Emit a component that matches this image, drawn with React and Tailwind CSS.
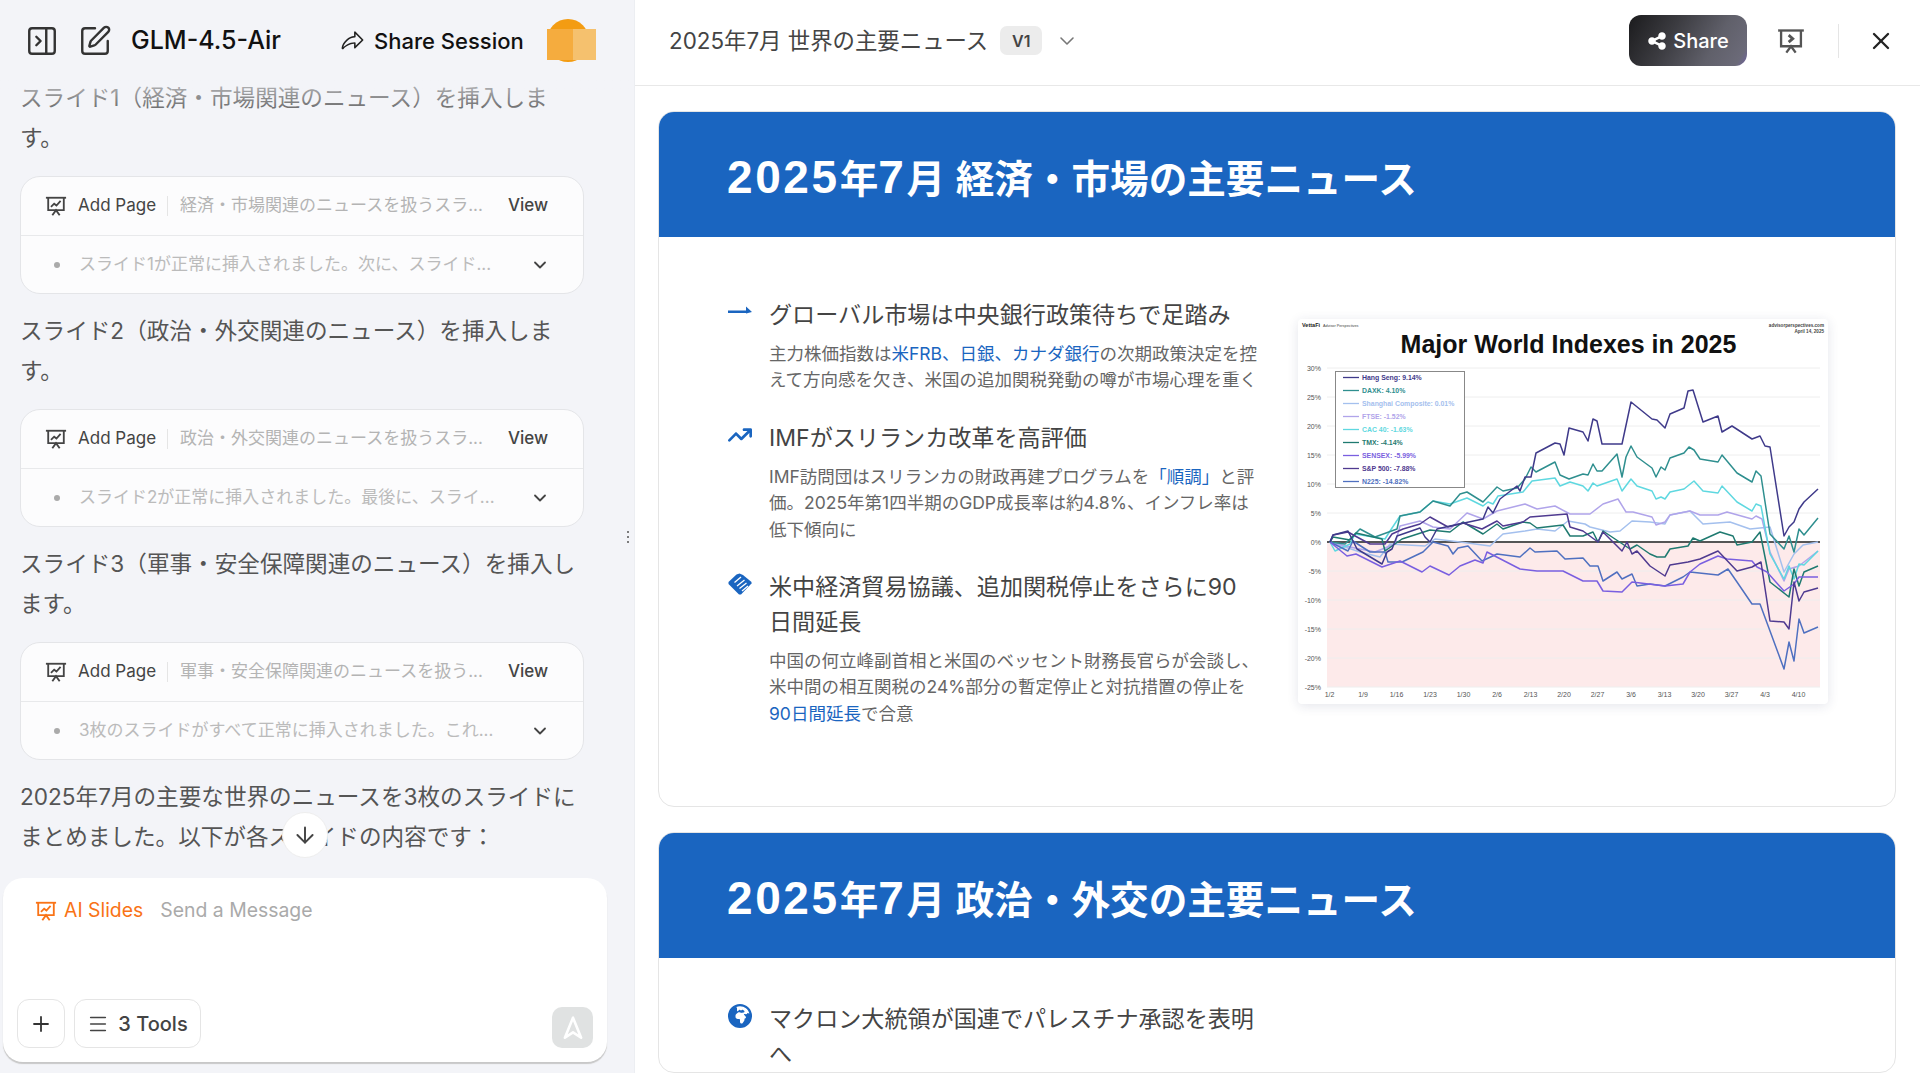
import { ArrowDown, ChevronDown, Menu, PanelRightClose, Plus, SquarePen, X } from "lucide-react";
import { FaArrowTrendUp, FaEarthAfrica, FaShareNodes } from "react-icons/fa6";
import { PiShareFat } from "react-icons/pi";

// point lists are in page pixels, the svg viewBox is set to the same origin
const series = [
  { c: "#a4c0ee", p: "1330,543 1345,548 1360,553 1380,558 1390,545 1425,547 1435,540 1460,543 1490,547 1503,535 1525,532 1537,530 1555,532 1568,522 1585,525 1590,528 1610,533 1620,532 1632,522 1650,523 1665,525 1670,516 1690,512 1703,525 1730,523 1750,530 1770,528 1784,573 1794,555 1803,546 1818,543" },
  { c: "#b0a4ea", p: "1330,543 1350,548 1375,553 1395,545 1400,527 1420,522 1433,528 1450,530 1467,514 1483,520 1497,512 1525,505 1537,510 1555,507 1570,515 1590,515 1603,505 1618,500 1626,513 1633,513 1652,518 1656,526 1665,523 1670,516 1690,512 1700,516 1718,516 1727,513 1752,520 1756,517 1762,520 1770,553 1784,582 1789,570 1799,567 1818,552" },
  { c: "#5fd8e0", p: "1330,543 1335,552 1350,545 1355,535 1385,540 1390,532 1400,517 1420,513 1433,502 1450,505 1467,499 1483,507 1488,503 1493,505 1498,497 1523,493 1532,482 1555,479 1560,487 1570,483 1583,487 1588,492 1593,484 1597,487 1617,480 1622,492 1631,480 1637,487 1652,492 1656,500 1661,498 1665,500 1670,493 1684,490 1694,482 1703,492 1718,494 1722,487 1737,503 1752,512 1756,505 1761,507 1770,555 1784,580 1789,567 1794,580 1799,565 1804,566 1818,552" },
  { c: "#2f8f8f", p: "1330,543 1345,545 1360,530 1375,538 1397,530 1400,517 1420,513 1433,502 1450,507 1460,495 1467,493 1483,503 1497,488 1503,492 1517,489 1525,480 1531,468 1536,473 1555,463 1560,476 1569,480 1583,475 1588,476 1593,465 1597,472 1602,472 1617,455 1622,478 1626,458 1631,447 1637,458 1652,469 1656,478 1661,468 1665,471 1670,459 1684,454 1689,448 1694,451 1700,460 1718,463 1722,456 1737,474 1752,483 1756,472 1761,477 1770,535 1784,550 1789,537 1794,553 1799,530 1804,536 1818,519" },
  { c: "#1f7a70", p: "1330,543 1333,538 1350,541 1356,534 1382,540 1385,552 1402,540 1430,531 1450,533 1463,523 1483,535 1497,525 1503,530 1523,523 1530,524 1537,529 1563,526 1570,537 1583,537 1593,533 1598,543 1603,532 1618,542 1630,550 1637,546 1650,555 1657,558 1665,558 1670,550 1688,547 1693,539 1700,542 1720,533 1733,537 1737,546 1752,543 1760,533 1770,583 1789,598 1794,570 1799,587 1804,573 1818,567" },
  { c: "#4f70c0", p: "1330,543 1348,552 1353,542 1370,553 1385,553 1388,563 1402,563 1423,553 1433,543 1448,547 1453,555 1458,549 1468,547 1482,562 1497,555 1520,558 1530,549 1535,553 1557,552 1565,560 1583,559 1590,567 1598,567 1603,582 1617,573 1622,580 1632,575 1637,587 1650,585 1665,587 1683,578 1690,573 1718,576 1728,570 1737,583 1752,605 1760,605 1770,632 1784,670 1789,643 1794,662 1799,620 1804,634 1818,628" },
  { c: "#7a5fe0", p: "1330,543 1347,557 1356,555 1382,568 1400,562 1422,573 1430,567 1449,576 1460,567 1475,561 1483,564 1487,553 1520,570 1537,572 1563,572 1583,582 1597,582 1603,592 1622,593 1632,583 1665,587 1683,585 1690,573 1700,565 1718,557 1727,560 1752,562 1757,568 1767,573 1784,592 1794,585 1799,578 1818,578" },
  { c: "#4f3a90", p: "1330,543 1333,536 1348,533 1357,538 1370,545 1385,545 1392,535 1403,530 1420,525 1430,518 1448,528 1463,524 1482,530 1497,522 1503,527 1523,523 1530,518 1567,515 1570,528 1583,532 1598,543 1603,533 1622,552 1627,543 1632,555 1637,552 1650,567 1665,577 1670,566 1688,563 1700,560 1718,552 1737,572 1752,568 1761,563 1770,622 1784,623 1789,630 1794,583 1799,602 1804,593 1818,589" },
  { c: "#3f3a8a", p: "1330,543 1333,536 1348,532 1353,542 1357,550 1382,565 1387,553 1392,550 1397,537 1420,529 1425,538 1430,543 1437,530 1450,527 1483,520 1488,508 1493,514 1500,500 1517,487 1520,492 1525,478 1531,478 1536,454 1555,444 1560,445 1564,456 1569,429 1583,433 1588,442 1593,420 1597,422 1602,445 1622,445 1631,403 1652,420 1657,421 1665,429 1670,415 1684,409 1688,392 1693,391 1703,423 1718,417 1722,433 1732,427 1752,440 1760,437 1765,447 1770,448 1784,537 1789,528 1794,523 1799,510 1804,503 1818,490" },
];

const legend = [
  ["Hang Seng: 9.14%", "#3f3a8a"],
  ["DAXK: 4.10%", "#2f8f8f"],
  ["Shanghai Composite: 0.01%", "#a4c0ee"],
  ["FTSE: -1.52%", "#b0a4ea"],
  ["CAC 40: -1.63%", "#5fd8e0"],
  ["TMX: -4.14%", "#1f7a70"],
  ["SENSEX: -5.99%", "#7a5fe0"],
  ["S&P 500: -7.88%", "#4f3a90"],
  ["N225: -14.82%", "#4f70c0"],
];

const dates = ["1/2", "1/9", "1/16", "1/23", "1/30", "2/6", "2/13", "2/20", "2/27", "3/6", "3/13", "3/20", "3/27", "4/3", "4/10"];
const pcts = [30, 25, 20, 15, 10, 5, 0, -5, -10, -15, -20, -25];

function Chart() {
  return (
    <svg viewBox="1298 320 530 385" width="530" height="385" className="block [font-family:Liberation_Sans,sans-serif]">
      <rect x="1327" y="543" width="493" height="145" fill="#fdeaea" />
      {pcts.map((v, i) => (
        <g key={v}>
          <line x1="1327" x2="1820" y1={369 + i * 29} y2={369 + i * 29} stroke={v === 0 ? "#555" : "#eeeeee"} strokeWidth={v === 0 ? 2 : 1} />
          <text x="1321" y={371.5 + i * 29} textAnchor="end" fontSize="7" fill="#555">{v}%</text>
        </g>
      ))}
      {dates.map((d, i) => (
        <text key={d} x={1329.5 + i * 33.5} y="698" textAnchor="middle" fontSize="7" fill="#555">{d}</text>
      ))}
      {series.map((s) => (
        <polyline key={s.c} points={s.p} fill="none" stroke={s.c} strokeWidth="1.5" strokeLinejoin="round" />
      ))}
      <rect x="1335.5" y="372.5" width="129" height="116" fill="#fff" stroke="#888" strokeWidth="1" />
      {legend.map(([label, c], i) => (
        <g key={label}>
          <line x1="1343" x2="1359" y1={378.5 + i * 13} y2={378.5 + i * 13} stroke={c} strokeWidth="1.3" />
          <text x="1362" y={381 + i * 13} fontSize="6.9" fontWeight="700" fill={c}>{label}</text>
        </g>
      ))}
      <text x="1302" y="328" fontSize="5.5" fontWeight="700" fill="#222">VettaFi</text>
      <text x="1323" y="328" fontSize="3.8" fill="#444">Advisor Perspectives</text>
      <text x="1824" y="328" textAnchor="end" fontSize="4.6" fontWeight="700" fill="#444">advisorperspectives.com</text>
      <text x="1824" y="334" textAnchor="end" fontSize="4.6" fontWeight="700" fill="#444">April 14, 2025</text>
      <text x="1568.5" y="354" textAnchor="middle" fontSize="25" fontWeight="700" fill="#111">Major World Indexes in 2025</text>
    </svg>
  );
}

function SlideIcon({ className, chevron }) {
  return (
    <svg viewBox="0 0 24 24" className={className} fill="none" stroke="currentColor" strokeWidth="2">
      <path d="M1 3h22" />
      <path d="M3.5 3v13.5h17V3" />
      <path d="M8 22l4-5.5 4 5.5" />
      {chevron ? <path d="M10 7l3.5 3-3.5 3" strokeWidth="2.4" /> : <path d="M6.5 13l3.5-3.5 2.5 2L17 6.5" />}
    </svg>
  );
}

function ThinArrow() {
  return (
    <svg viewBox="0 0 24 14" className="mt-[5px] h-[14px] w-[24px]" fill="currentColor">
      <path d="M0 5.6h18V1.5L24 7l-6 1.5V8H0z" />
    </svg>
  );
}

function HandsIcon() {
  return (
    <svg viewBox="0 0 24 22" className="mt-[1px] h-[22px] w-[24px]">
      <path d="M8.5 1.5L11.5.5 15 2l8.5 7v1.5L13 21.5h-2L.5 11V9z" fill="currentColor" />
      <path d="M6.5 9.5L13 4M9 13l7.5-6M11.5 15.5L18.5 10M14 18l6-5" stroke="#fff" strokeWidth="1.3" fill="none" />
    </svg>
  );
}

function ToolCard({ desc, result }) {
  return (
    <div className="mt-[18px] w-[564px] rounded-[20px] border border-[#e4e5e8] bg-[#fcfcfd] text-[17px]">
      <div className="flex h-[59px] items-center border-b border-[#e8e9eb] pl-[24px]">
        <SlideIcon className="h-[22px] w-[22px] text-[#444]" />
        <span className="ml-[11px] w-[78px] whitespace-nowrap text-[#444]">Add Page</span>
        <span className="ml-[11px] h-[20px] w-px bg-[#e5e5e5]" />
        <span className="ml-[12px] w-[328px] whitespace-nowrap text-[#b4b4b4]">{desc}</span>
        <span className="whitespace-nowrap font-medium text-[#444]">View</span>
      </div>
      <div className="flex h-[57px] items-center pl-[33px]">
        <span className="h-[6px] w-[6px] rounded-full bg-[#aaa]" />
        <span className="ml-[19px] w-[451px] whitespace-nowrap text-[#bbb]">{result}</span>
        <ChevronDown className="h-[20px] w-[20px] text-[#444]" strokeWidth={2.2} />
      </div>
    </div>
  );
}

function Para({ children, first }) {
  return <p className={`${first ? "" : "mt-[17px]"} w-[565px] text-[22.6px] leading-[40px] text-[#555]`}>{children}</p>;
}

function Num({ children }) {
  return <span className="text-[46px] tracking-[2.6px]">{children}</span>;
}

function SlideHeader({ topic }) {
  return (
    <div className="flex h-[125px] items-center bg-[#1a65c0] pl-[68px] pt-[7px]">
      <h1 className="whitespace-nowrap text-[38.6px] font-bold leading-[50px] text-white [font-family:Liberation_Sans,Noto_Sans_CJK_JP,sans-serif]">
        <Num>2025</Num>年<Num>7</Num>月 {topic}の主要ニュース
      </h1>
    </div>
  );
}

function Item({ icon, title, children }) {
  return (
    <div className="flex">
      <div className="w-[42px] shrink-0 pl-[1px] pt-[2px] text-[24px] text-[#1a65c0]">{icon}</div>
      <div className="w-[492px]">
        <h3 className="whitespace-nowrap text-[23.1px] leading-[35px] text-[#444]">{title}</h3>
        {children ? <p className="mt-[8px] whitespace-nowrap text-[17.5px] leading-[26.4px] text-[#666]">{children}</p> : null}
      </div>
    </div>
  );
}

function Link({ children }) {
  return <span className="text-[#1a65c0]">{children}</span>;
}

function Sidebar() {
  return (
    <aside className="relative flex h-full w-[635px] shrink-0 flex-col overflow-hidden border-r border-[#eceef2] bg-[#f3f4f8]">
      <header className="flex h-[78px] shrink-0 items-center pl-[25px] pt-[4px]">
        <PanelRightClose className="h-[34px] w-[34px] text-[#333]" strokeWidth={1.7} />
        <SquarePen className="ml-[19px] h-[34px] w-[34px] text-[#333]" strokeWidth={1.7} />
        <span className="ml-[19px] w-[189px] whitespace-nowrap text-[25px] font-medium text-[#111]">GLM-4.5-Air</span>
        <PiShareFat className="ml-[20px] h-[25px] w-[25px] text-[#222]" />
        <span className="ml-[9px] w-[151px] whitespace-nowrap text-[22px] font-medium text-[#111]">Share Session</span>
        <div className="relative ml-[22px] h-[44px] w-[50px]">
          <div className="absolute left-0 top-0 h-[43px] w-[42px] rounded-full bg-[#f39c12]" />
          <div className="absolute left-0 top-[10px] h-[31px] w-[26px] bg-[#f5ac3e]" />
          <div className="absolute left-[26px] top-[10px] h-[31px] w-[23px] bg-[#f5c16e]" />
        </div>
      </header>
      <div className="px-[20px]">
        <Para first>スライド1（経済・市場関連のニュース）を挿入します。</Para>
        <ToolCard desc="経済・市場関連のニュースを扱うスラ..." result="スライド1が正常に挿入されました。次に、スライド..." />
        <Para>スライド2（政治・外交関連のニュース）を挿入します。</Para>
        <ToolCard desc="政治・外交関連のニュースを扱うスラ..." result="スライド2が正常に挿入されました。最後に、スライ..." />
        <Para>スライド3（軍事・安全保障関連のニュース）を挿入します。</Para>
        <ToolCard desc="軍事・安全保障関連のニュースを扱う..." result="3枚のスライドがすべて正常に挿入されました。これ..." />
        <Para>2025年7月の主要な世界のニュースを3枚のスライドにまとめました。以下が各スライドの内容です：</Para>
      </div>
      <div className="absolute left-0 top-[78px] h-[40px] w-full bg-gradient-to-b from-[#f3f4f8]/70 to-transparent" />
      <div className="absolute left-[282px] top-[812px] flex h-[46px] w-[46px] items-center justify-center rounded-full border border-[#eeeeee] bg-white">
        <ArrowDown className="h-[26px] w-[26px] text-[#444]" strokeWidth={1.8} />
      </div>
      <div className="absolute left-[3px] top-[878px] flex h-[184px] w-[604px] flex-col justify-between rounded-[20px] bg-white pb-[14px] pl-[14px] pr-[14px] pt-[18px] shadow-[0_2px_1px_#c8c8c8]">
        <div className="flex items-center pl-[18px] text-[19.4px]">
          <SlideIcon className="h-[22px] w-[22px] text-[#f97316]" />
          <span className="ml-[7px] text-[#f97316]">AI Slides</span>
          <span className="ml-[17px] text-[#aaa]">Send a Message</span>
        </div>
        <div className="flex items-end">
          <div className="flex h-[49px] w-[48px] items-center justify-center rounded-[12px] border border-[#e5e5e5]">
            <Plus className="h-[24px] w-[24px] text-[#333]" strokeWidth={1.8} />
          </div>
          <div className="ml-[9px] flex h-[49px] w-[127px] items-center justify-center rounded-[12px] border border-[#e5e5e5] text-[20px] font-medium text-[#444]">
            <Menu className="mr-[9px] h-[22px] w-[22px] text-[#444]" strokeWidth={1.7} />
            3 Tools
          </div>
          <div className="ml-auto flex h-[41px] w-[41px] items-center justify-center rounded-[10px] bg-[#e0e2e2]">
            <svg viewBox="0 0 24 24" className="h-[26px] w-[26px]" fill="none" stroke="#fff" strokeWidth="2.4" strokeLinejoin="round">
              <path d="M12 2.5L4.5 21 12 16l7.5 5z" />
            </svg>
          </div>
        </div>
      </div>
      <div className="absolute left-[627px] top-[531px] flex flex-col gap-[3px]">
        <span className="h-[2px] w-[2px] rounded-full bg-[#555]" />
        <span className="h-[2px] w-[2px] rounded-full bg-[#555]" />
        <span className="h-[2px] w-[2px] rounded-full bg-[#555]" />
      </div>
    </aside>
  );
}

function Preview() {
  return (
    <main className="flex h-full min-w-0 flex-1 flex-col overflow-hidden bg-white">
      <header className="flex h-[86px] shrink-0 items-center border-b border-[#e8e8e8] pb-[4px] pl-[34px] pr-[25px]">
        <span className="whitespace-nowrap text-[22.4px] text-[#444]">2025年7月 世界の主要ニュース</span>
        <span className="ml-[12px] flex h-[29px] w-[42px] items-center justify-center rounded-[7px] bg-[#ececec] text-[16px] font-semibold text-[#444]">V1</span>
        <ChevronDown className="ml-[13px] h-[24px] w-[24px] text-[#777]" strokeWidth={1.6} />
        <div className="ml-auto flex h-[51px] w-[118px] items-center justify-center rounded-[12px] bg-[linear-gradient(120deg,#1b1b1d_0%,#3b3b40_35%,#60606a_70%,#6b6a78_92%,#6f62a0_100%)] text-[20px] font-medium text-white">
          <FaShareNodes className="mr-[6px] h-[20px] w-[20px]" />
          Share
        </div>
        <SlideIcon className="ml-[30px] h-[28px] w-[28px] text-[#555]" chevron />
        <span className="ml-[33px] h-[34px] w-px bg-[#e5e5e5]" />
        <X className="ml-[28px] h-[28px] w-[28px] text-[#222]" strokeWidth={2} />
      </header>
      <div className="flex flex-col gap-[25px] pl-[23px] pr-[24px] pt-[25px]">
        <section className="h-[696px] shrink-0 overflow-hidden rounded-[16px] border border-[#e5e5e5]">
          <SlideHeader topic="経済・市場" />
          <div className="flex pl-[68px] pt-[61px]">
            <div className="flex w-[534px] shrink-0 flex-col gap-[27px]">
              <Item icon={<ThinArrow />} title="グローバル市場は中央銀行政策待ちで足踏み">
                主力株価指数は<Link>米FRB、日銀、カナダ銀行</Link>の次期政策決定を控<br />えて方向感を欠き、米国の追加関税発動の噂が市場心理を重く
              </Item>
              <Item icon={<FaArrowTrendUp />} title="IMFがスリランカ改革を高評価">
                IMF訪問団はスリランカの財政再建プログラムを<Link>「順調」</Link>と評<br />価。2025年第1四半期のGDP成長率は約4.8%、インフレ率は<br />低下傾向に
              </Item>
              <Item icon={<HandsIcon />} title={<>米中経済貿易協議、追加関税停止をさらに90<br />日間延長</>}>
                中国の何立峰副首相と米国のベッセント財務長官らが会談し、<br />米中間の相互関税の24%部分の暫定停止と対抗措置の停止を<br /><Link>90日間延長</Link>で合意
              </Item>
            </div>
            <div className="ml-[37px] mt-[21px] h-[385px] w-[530px] shrink-0 rounded-[4px] bg-white shadow-[0_2px_12px_rgba(30,40,90,0.12)]">
              <Chart />
            </div>
          </div>
        </section>
        <section className="shrink-0 overflow-hidden rounded-[16px] border border-[#e5e5e5]">
          <SlideHeader topic="政治・外交" />
          <div className="pl-[68px] pt-[44px]">
            <Item icon={<FaEarthAfrica />} title={<>マクロン大統領が国連でパレスチナ承認を表明<br />へ</>} />
          </div>
        </section>
      </div>
    </main>
  );
}

export default function App() {
  return (
    <div className="flex h-[1073px] w-[1920px] overflow-hidden [font-family:Inter,Noto_Sans_CJK_JP,sans-serif]">
      <Sidebar />
      <Preview />
    </div>
  );
}
